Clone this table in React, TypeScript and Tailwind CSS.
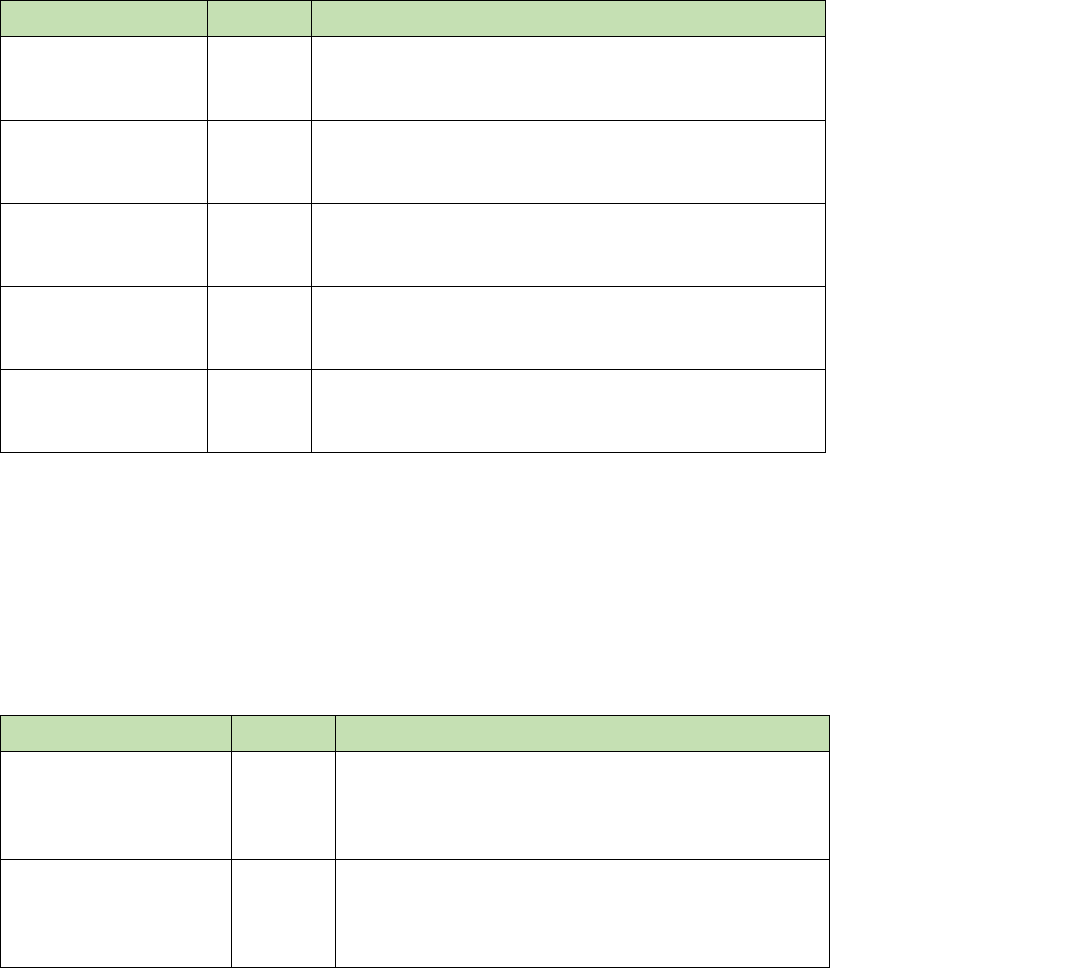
export default function App() {
  const rows1 = ["h-[83px]", "h-[82px]", "h-[82px]", "h-[82px]", "h-[82px]"];
  return (
    <div className="w-[1080px] h-[968px] bg-white flex flex-col" style={{ fontFamily: '"Liberation Sans", Arial, sans-serif' }}>
      <div className="grid grid-cols-[206px_103px_513px] gap-px bg-black p-px w-fit">
        <div className="h-[35px] bg-[#c5e0b3]" />
        <div className="h-[35px] bg-[#c5e0b3]" />
        <div className="h-[35px] bg-[#c5e0b3]" />
        {rows1.map((h, i) => (
          <>
            <div key={`a${i}`} className={`${h} bg-white`} />
            <div key={`b${i}`} className={`${h} bg-white`} />
            <div key={`c${i}`} className={`${h} bg-white`} />
          </>
        ))}
      </div>
      <div className="mt-[262px] grid grid-cols-[230px_103px_493px] gap-px bg-black p-px w-fit">
        <div className="h-[35px] bg-[#c5e0b3]" />
        <div className="h-[35px] bg-[#c5e0b3]" />
        <div className="h-[35px] bg-[#c5e0b3]" />
        <div className="h-[107px] bg-white" />
        <div className="h-[107px] bg-white" />
        <div className="h-[107px] bg-white" />
        <div className="h-[107px] bg-white" />
        <div className="h-[107px] bg-white" />
        <div className="h-[107px] bg-white" />
      </div>
    </div>
  );
}
